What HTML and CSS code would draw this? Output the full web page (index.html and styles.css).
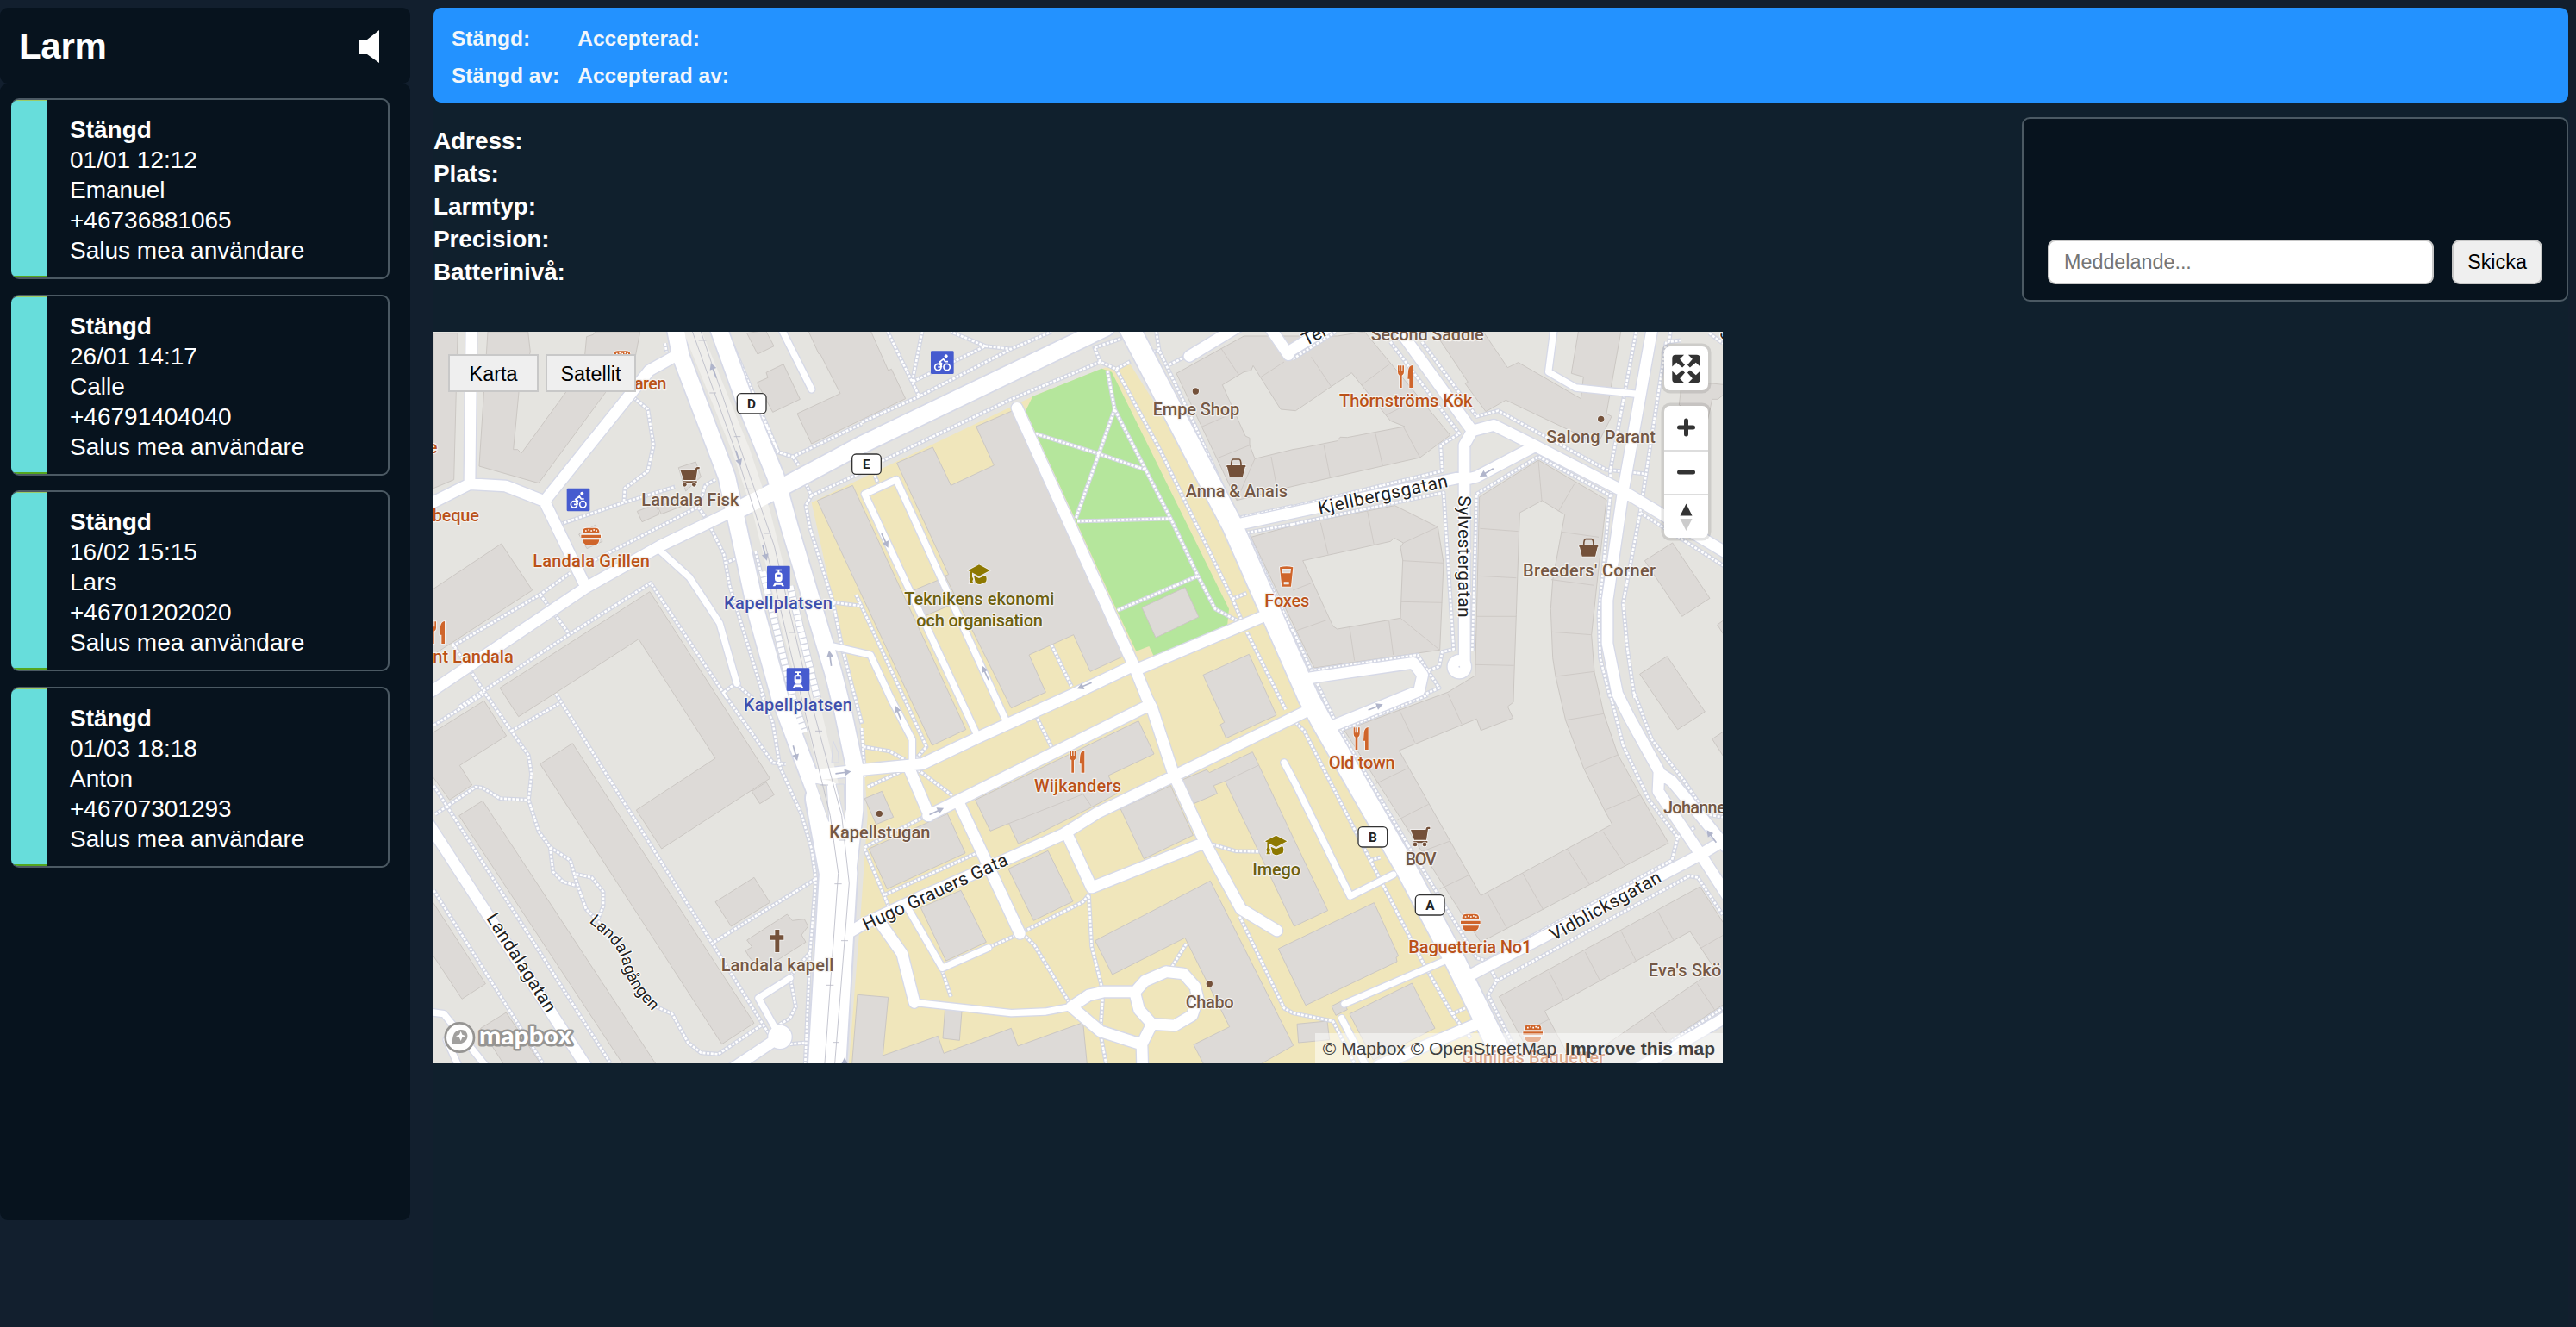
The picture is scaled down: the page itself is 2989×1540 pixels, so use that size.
FILE: index.html
```html
<!DOCTYPE html>
<html lang="sv">
<head>
<meta charset="utf-8">
<title>Larm</title>
<link rel="stylesheet" href="styles.css">
</head>
<body>
<div class="app">
  <aside class="sidebar">
    <header class="sidebar-head">
      <h1>Larm</h1>
      <svg class="speaker" viewBox="0 0 26 38" aria-hidden="true"><path d="M1 11h9L24 0v38L10 28H1z"/></svg>
    </header>
    <div class="alarm-list">
      <article class="alarm"><div class="bar"></div><div class="alarm-text"><b>Stängd</b><span>01/01 12:12</span><span>Emanuel</span><span>+46736881065</span><span>Salus mea användare</span></div></article>
      <article class="alarm"><div class="bar"></div><div class="alarm-text"><b>Stängd</b><span>26/01 14:17</span><span>Calle</span><span>+46791404040</span><span>Salus mea användare</span></div></article>
      <article class="alarm"><div class="bar"></div><div class="alarm-text"><b>Stängd</b><span>16/02 15:15</span><span>Lars</span><span>+46701202020</span><span>Salus mea användare</span></div></article>
      <article class="alarm"><div class="bar"></div><div class="alarm-text"><b>Stängd</b><span>01/03 18:18</span><span>Anton</span><span>+46707301293</span><span>Salus mea användare</span></div></article>
    </div>
  </aside>
  <main class="main">
    <section class="status">
      <span>Stängd:</span><span>Accepterad:</span>
      <span>Stängd av:</span><span>Accepterad av:</span>
    </section>
    <section class="details">
      <div class="info">
        <span>Adress:</span><span>Plats:</span><span>Larmtyp:</span><span>Precision:</span><span>Batterinivå:</span>
      </div>
      <form class="chat">
        <input type="text" placeholder="Meddelande...">
        <button type="button">Skicka</button>
      </form>
    </section>
    <section class="map">
      <svg class="map-canvas" viewBox="9 15 4488 2547" preserveAspectRatio="none">
        <defs>
          <g id="w22">
            <path d="M790 770L900 870 1005 1030 1065 1240M1215-5L1325 215M1665 2030L1780 2230 1940 2160M1510 580L1620 530 2000 1365M1510 580L1897 1410M1400 1110L1530 1140 1600 1290 1675 1435V1530M1250 2265L1140 2335 1210 2460M3910 0L3890 155 3985 210 4200 232M3170 2405L3260 2580M2970 1515L3010 1590 3200 1980 3350 1905M3180 2355L3540 2200M1683 2350L2020 2387 2140 2382 2230 2365M9 2385L45 2390 190 2570M55 2480L95 2570"/>
          </g>
          <g id="w38">
            <path d="M-10 1275L540 905 800 760 1050 640M141 0L135 545M-5 615L135 545 260 552 395 605 760 150 850 100M395 605L540 905M2040 280L2450 1185 2492 1290 2510 1325 2585 1555 2695 1795 2820 2025 2945 2100M2460 1190L2900 1005M2440 1180L2230 1280 1910 1425 1710 1520 1500 1540 1320 1560M1730 1700L2500 1315M1665 1535L1735 1700M1840 1660L2050 2110M1450 2110L1500 2080 1700 1985 2200 1765 2320 1690 2580 1565 3060 1330M2215 1765L2300 1950 2690 1795M1570 2080L1640 2180 1683 2350M2450 2315L2485 2275 2560 2243 2620 2250 2660 2295 2670 2335 2650 2395 2590 2430 2510 2425 2465 2375ZM2230 2365L2290 2325 2340 2313H2450M2230 2365L2330 2450 2470 2495M2510 2425L2475 2495 2477 2570M3300 2570L3640 2425M2790 690L3000 645 3595 520M3350-20L3625 360 3597 410 3598 1170M3625 360L3700 340 3840 410 4150 570 4510 785M3600 530L3640 520 3840 415M4252 0L4150 570 4095 950V1100L4130 1275 4170 1355 4275 1545 4272 1615 4420 1835 4520 1990M4275 1550L4320 1580 4510 1810M3580 2275L4420 1835 4510 1780M4200 2580L4510 2400M3060 1220L3420 1168 3452 1210 3440 1265 3120 1395M2640 100L2830-15M2920 0L2985 95M2985 85L3140-10M-10 1725L545 2580M1215 2470L1050 2580"/>
            <circle cx="3580" cy="1181" r="22"/><circle cx="1215" cy="2470" r="22"/>
          </g>
          <g id="w58">
            <path d="M1050 645L1230 552 1500 408 2350 0M850 0L870 100 1030 520 1070 700 1135 1000 1215 1290 1290 1490 1370 1700M1000 0L1090 250 1200 520 1250 700 1340 1000 1400 1200 1435 1340 1475 1530V1680L1450 1900"/>
          </g>
          <g id="w70"><path d="M2425-10L2790 690 3055 1290 3110 1390 3400 1895 3570 2215 3745 2570"/></g>
          <g id="w130"><path d="M1370 1640L1418 1900 1378 2580"/></g>
          <g id="foot">
            <path d="M695 235L755 285 775 410 755 500 675 560 672 605M450 685L670 610 850 555M570 810L930 625 955 660M940 600L955 550 990 530M75 1110L380 930 485 855M380 930L480 1065M100 1320L480 1070 765 890 1030 1290M75 1100L200 1290M1030 15L1210 435 1260 450 1500 335M1150 310L1210 435M1260 450L1280 480M1305 545L1325 585 1500 505M1325 585L1305 620 1320 700 1400 957 1430 1110 1500 1380M1400 957L1500 970M975 700L1020 790 1040 900 1160 1290M1025 820L1060 805M1060 1240L1120 1290M1020 1270L1060 1240M1130 780L1150 860M815 55L820 85"/>
            <path transform="translate(1500)" d="M90 15L175 190 200 240M210 15L175 190 430 65 310 15M430 65L520 75 660 15M0 330L200 240 520 75M70 465L520 250 830 120 885 145 935 118M830 120L810 70 905 38M885 145L1040 430 1290 945 1320 1015M855 150L880 285 1075 665 1170 865 1230 980 1305 1020M605 370L825 440 985 495M880 285L825 440 745 665M750 675L1075 665M890 985L1170 865M1290 945L1340 925M1340 1060L1475 1330M660 1105L730 1250M-20 930L140 1275 225 1460 190 1500M45 515L55 540M1025 15L1035 80 1150 320 1305 665 1500 622M1035 80L995 90M1070 130L1130 100M1500 685L1340 715 1420 890 1500 1060"/>
            <path transform="translate(3000)" d="M340 50L580 370 515 410 520 500 0 625M450 50L640 310 715 290 1090 495 1230 510M0 685L525 575 560 1120 520 1130 510 1180 470 1195 510 1255 430 1290M625 1125L640 580 855 450 1105 585 1065 1000 1070 1150 1105 1290M1195 15L1105 500 1110 590M1300 50L1210 640 1150 960 1165 1120 1190 1290M1210 645L1500 830M0 1050L65 1195 435 1140 470 1195M85 1240L145 1365M0 110L150 15M1315 15L1310 50 1350 45M1450 20L1497 55"/>
            <path transform="translate(0 1275)" d="M10 110L185 0M190 0L280 130 340 215 350 280 340 370 375 480 415 535 485 580 510 665 540 750 590 800M415 535L425 620 460 655 505 668M505 628L560 640 600 690V740L580 790M280 130L445 35M435 0L1180 1190M15 420L155 325 180 328 240 365 340 370M10 320L625 1287M10 685L390 1287M785 1090L840 1115 895 1215 940 1250 1000 1255 1150 1155M985 865L1340 645M1020 0L1190 240 1235 245M1150 0L1190 100 1215 255 1290 420 1325 540 1340 645 1320 900 1303 1287M1320 900L1250 985 1270 1090 1250 1130 1200 1160M1250 1220L1305 1215"/>
            <path transform="translate(1500 1275)" d="M5 185L95 200 150 230M20 325L150 265M195 265L315 355M0 120L10 290M605 75L660 185M10 535L215 430M10 540L95 745M80 700L400 555M450 880L540 840 770 725 790 700 800 880 840 1040 830 1180 850 1287M570 845L600 875 725 1080M280 965L310 1055M1080 950L1130 870M1220 525L1300 548 1385 550M1315 775L1470 1095 1500 1112 1640 1140 1715 1287"/>
            <path transform="translate(3000 1275)" d="M10 100L40 130 270 580 450 930 555 1115 620 1200M270 580L305 570M165 130L400 525 640 920 675 930 1320 580 1340 500 1240 370 1150 180 1105 0M370 540L400 525M1190 0L1250 160 1360 300 1440 420 1497 430M1340 500L1400 465M675 930L710 1000 680 1050 800 1287M710 1000L1380 635 1410 640 1497 770M555 1115L600 1095M1200 1287L1497 1095M170 125L470 5"/>
          </g>
          <g id="burger"><path d="M-29-12V-20Q-27-30-14-30H14Q27-30 29-20V-12ZM-34-6H34V4H-34ZM-29 11H29Q27 29 12 29H-12Q-27 29-29 11Z"/><path class="crumbs" d="M-20-20h5M-10-23h5M-1-20h5M8-23h5M17-20h5"/></g>
          <g id="cart"><path d="M-34-24H18L20-31Q22-34 26-34H33V-27H26L20 11H-22ZM-24 15H24V22H-24Z"/><circle cx="-19" cy="27" r="7"/><circle cx="14" cy="27" r="7"/></g>
          <g id="fork"><path d="M-26-38h5v18h3v-18h5v18h3v-18h5v22q0 9-7 12V39H-20V-4q-6-3-6-12ZM10-20Q12-38 25-39V39H14V8H8Z"/></g>
          <g id="basket"><path d="M-33-8H33V-2H31L23 31H-23L-31-2H-33Z"/><path class="handle" d="M-17-7Q-17-29-10-29H10Q17-29 17-7"/></g>
          <g id="cap"><path d="M-38-14L0-34 38-14 0 6ZM-18 5L0 13 22 3Q29 12 24 26L4 34Q-14 33-14 22ZM-31-9H-24V8L-20 16-23 23 -20 31H-34L-31 23-34 16-31 8Z"/></g>
          <g id="beer"><path fill-rule="evenodd" d="M-23-33Q0-40 23-33L16 34H-16ZM-16-28L-14-12H14L16-28ZM-9 18V27H9V18Z"/></g>
          <g id="bike"><rect x="-40" y="-40" width="80" height="80" rx="4"/><g class="ink"><circle cx="-15" cy="16" r="11"/><circle cx="16" cy="16" r="11"/><path d="M-15 16L-5 16-2 4-9-2 4-12 10-3H20M-9-2L-2 16"/><circle class="solid" cx="13" cy="-22" r="6"/></g></g>
          <g id="tram"><rect x="-40" y="-40" width="80" height="80" rx="4"/><path class="white" fill-rule="evenodd" d="M-11-28H11V-23H3V-17Q13-16 13-9V6Q13 14 6 15H-6Q-13 14-13 6V-9Q-13-16-3-17V-23H-11ZM-7-10V-1H7V-10ZM-12 17H12L20 31H12L9 26H-9L-12 31H-20Z"/></g>
          <g id="arrow"><path d="M-27 0H10" /><path class="tip" d="M5-12L28 0 5 12Z"/></g>
          <path id="gangen" d="M550 2070C620 2130 655 2160 668 2215S700 2305 775 2385"/>
        </defs>

        <rect class="land" x="0" y="0" width="4510" height="2580"/>
        <path class="campus" d="M1325 610L1400 950 1455 1170 1500 1400 1520 1700 1495 2055 1455 2562H3740L3560 2205 3400 1895 3055 1290 2790 690 2435 130 2345 140 2095 240 1500 525Z"/>
        <path class="park" d="M2095 240L2335 143 2370 155 2778 980 2772 1040 2520 1152 2500 1110 2455 1127 2390 990 2070 290Z"/>

        <g class="buildings">
          <path d="M9 20H93L80 530 9 560ZM198 15H338L346 85 306 225 287 425 302 425 315 438 470 225 536 95 542 32 565 25 572 15H728L712 100 608 226 375 542 168 483ZM1100 20L1165 10 1194 65 1137 93ZM1135 192L1173 175 1167 157 1227 128 1285 250 1190 295ZM1313 10H1530L1592 150 1603 145 1652 248 1325 405 1275 300 1425 230 1355 92 1350 92ZM862 488L922 468 940 520 887 570ZM718 640L783 615 795 650 735 677ZM790 625L880 590 905 610 802 650ZM515 720L572 688 597 745 543 770ZM0 916L245 753 353 915 0 1145ZM240 1255L762 920 1180 1570 803 1815 715 1680 990 1500 723 1085 430 1275 305 1355ZM1117 1615L1167 1583 1195 1627 1145 1658ZM1345 603L1468 550 1862 1400 1745 1455Z"/>
          <path transform="translate(1500)" d="M122 472L247 417 310 550 460 480 398 345 525 290 910 1145 795 1198 737 1070 582 1140 640 1270 520 1325 290 865 302 860ZM180 915L265 880 305 968 218 1005ZM975 975L1125 905 1173 1008 1023 1080ZM1188 1210L1348 1138 1443 1350 1268 1430 1248 1383 1262 1375Z"/>
          <path fill-rule="evenodd" d="M2595 160L2830 30 3155 30 3250 15 3548 375 3443 453 3000 553 2805 602ZM2755 200L2830 155 2855 150 2862 133 2958 285 3010 290 3205 158 3340 325 3390 345 3190 383 3165 382 3155 395 3030 420 3000 425 2868 457 2850 410 2850 385 2835 378Z"/>
          <path fill-rule="evenodd" d="M2855 730L3000 690 3355 620 3505 695 3525 820 3512 1123 3075 1185 3000 1030ZM3035 812L3340 745 3353 733 3385 750 3375 765 3383 810 3375 1012 3155 1050 3140 1040Z"/>
          <path transform="translate(3000)" fill-rule="evenodd" d="M650 590L855 462 1092 600 1058 900 1040 1070 1050 1200 1083 1345 1132 1488 1210 1628 1308 1795 655 2140 600 2060 180 1403 540 1270 635 1212ZM790 645L868 603 947 652 935 715 905 880 898 980 905 1150 915 1215 950 1368 1013 1535 1085 1680 1112 1730 655 1978 370 1473 640 1363 655 1403 767 1360 748 1320 768 1305 770 1230 778 1000Z"/>
          <path transform="translate(3000)" d="M490 10H660L748 140 785 122 1003 248 1012 172 970 160 995 10H1143L1092 300 1110 310 1062 405 742 253 672 293 600 195 610 190ZM1355 185L1510 200V225L1480 250 1460 250 1445 320 1345 270ZM1225 812L1322 750 1452 943 1355 1006ZM1478 1035L1510 1012V1085ZM1208 1207L1303 1145 1435 1338 1340 1400ZM1460 1433L1510 1400V1510ZM198 2390L415 2283 495 2440 280 2550ZM15 2425L120 2415 128 2480 20 2490ZM135 2363L175 2343 190 2375 150 2395Z"/>
          <path transform="translate(0 1275)" d="M0 140L185 25 263 147 100 250 143 318 65 370 0 280ZM380 245L493 173 1125 1147 1013 1220ZM98 425L180 373 790 1300H675ZM990 725L1125 640 1180 727 1045 810ZM1100 858L1240 768 1258 790 1300 785 1313 810 1290 840 1305 865 1155 960 1110 920 1095 895 1118 882ZM0 715L190 1010 108 1063 0 900ZM173 1165L262 1110 390 1300H260Z"/>
          <path transform="translate(1500 1275)" d="M10 365L70 340 110 430 50 455ZM25 540L298 418 360 555 88 680ZM395 370L963 95 1017 210 858 285 888 348 800 395 545 523 512 452 447 478ZM900 400L1075 320 1153 493 982 575ZM1115 300L1200 265 1210 275 1360 203 1622 755 1505 810 1265 305 1225 320 1237 348 1155 383ZM510 610L648 547 735 723 598 790ZM205 745L345 685 433 865 293 930ZM812 860L1213 652 1502 1225 1370 1300H1195L1155 1222 1280 1160 1125 850 872 978ZM1450 888L1783 728 1868 913 1860 918 1863 933 1545 1085ZM-15 1048L92 1057 73 1260 265 1192 285 1252 520 1165 543 1227 770 1145 785 1300H-35ZM290 1095L348 1105 340 1207 282 1200Z"/>
          <path transform="translate(3000 1275)" fill-rule="evenodd" d="M718 1055L1418 672 1510 815V1075L1170 1300H850ZM877 1105L1383 828 1470 960 1130 1195 980 1300Z"/>
          <path class="walls" d="M2750 72L2812 165M2890 172L2970 120M2685 345L2770 308M2738 455L2850 410M2868 457L2805 602M2925 450L2945 560M3065 103L3133 205M3240 200L3340 125M3325 305L3385 275M3108 408L3130 522M3288 370L3313 482M3385 345L3443 453M3097 680L3123 790M3260 640L3283 757M3385 750L3505 695M3383 812L3525 820M3378 955L3520 958M3375 1012L3512 1123M3335 1022L3350 1140M3198 1045L3215 1160M3015 1055L3120 1018M3000 915L3065 890M3855 462L3867 603M3980 545L3925 640M3652 700L3785 710M3935 712L4065 730M3648 865L3778 872M3900 878L4050 898M3640 1006H3778M3903 1060L4040 1070M3635 1174L3770 1177M3915 1215L4050 1198M3950 1367L4083 1345M4018 1535L4132 1488M4088 1680L4210 1628M4080 1755L4155 1870M3955 1815L4032 1938M3800 1900L3872 2027M3678 1970L3747 2095M3512 1955L3617 1905M3435 1830L3548 1788M3365 1715L3473 1660M3290 1588L3400 1535M3370 1330L3425 1445M3540 1275L3588 1380M3893 2245L3945 2345M4018 2175L4070 2275M4145 2105L4195 2205M4272 2035L4325 2132M4418 2162L4500 2115M4250 2382L4300 2455M4408 2285L4468 2375M3850 2430L3890 2410M2012 1727L2270 1625 2298 1665M2765 1580L2880 1525"/>
        </g>

        <use href="#foot" class="foot-case"/><use href="#foot" class="foot-dots"/>

        <use href="#w22" class="case" stroke-width="30"/><use href="#w38" class="case" stroke-width="46"/><use href="#w58" class="case" stroke-width="68"/><use href="#w70" class="case" stroke-width="80"/><use href="#w130" class="case" stroke-width="142"/>
        <path class="trambed" d="M905 0L1080 430 1150 640 1240 1000 1330 1340 1400 1640"/>
        <path class="platform" d="M1155 850L1260 1290 1300 1410M1250 900L1345 1290"/>
        <path class="sleepers" d="M1155 850L1260 1290 1300 1410M1250 900L1345 1290"/>
        <use href="#w22" class="road" stroke-width="22"/><use href="#w38" class="road" stroke-width="38"/><use href="#w58" class="road" stroke-width="58"/><use href="#w70" class="road" stroke-width="70"/><use href="#w130" class="road" stroke-width="130"/>
        <path class="island" d="M1395 1515H1420L1418 1480 1400 1440ZM1410 1590H1438L1442 1720ZM1340 1588L1378 1595 1385 1720Z"/>
        <path class="rail" d="M905 0L1060 430 1165 760 1290 1290 1390 1700 1418 1900 1370 2575M935 0L1070 400 1195 760 1320 1290 1430 1700 1456 1935 1405 2575M932 45H958M970 228H993M1055 380H1078M1092 562H1115M1160 717H1184M1247 1062H1270M1338 1405H1362M1357 1593H1383M1420 1785H1444M1405 1937H1430M1428 2135H1452M1377 2290H1402M1398 2489H1422"/>
        <g class="arrows">
          <use href="#arrow" transform="translate(984 150) rotate(-110)"/><use href="#arrow" transform="translate(1070 455) rotate(72)"/><use href="#arrow" transform="translate(1162 785) rotate(75)"/><use href="#arrow" transform="translate(1390 1152) rotate(-98)"/>
          <use href="#arrow" transform="translate(1580 742) rotate(65)"/><use href="#arrow" transform="translate(1930 1203) rotate(-115)"/><use href="#arrow" transform="translate(2275 1247) rotate(157)"/><use href="#arrow" transform="translate(3675 505) rotate(150)"/>
          <use href="#arrow" transform="translate(1268 1482) rotate(75)"/><use href="#arrow" transform="translate(1435 1550) rotate(-8)"/><use href="#arrow" transform="translate(1627 1343) rotate(-112)"/><use href="#arrow" transform="translate(1760 1685) rotate(-25)"/><use href="#arrow" transform="translate(3288 1322) rotate(-22)"/><use href="#arrow" transform="translate(4458 1772) rotate(-127)"/><use href="#arrow" transform="translate(1440 2570) rotate(-90)"/>
        </g>

        <g class="brown">
          <use href="#cart" x="902" y="520"/><use href="#cart" x="3445" y="1773"/><use href="#basket" x="2803" y="488"/><use href="#basket" x="4030" y="766"/>
          <path d="M1198 2097h15v19h15v16h-15v43h-15v-43h-16v-16h16z"/>
          <circle cx="2662" cy="222" r="11"/><circle cx="4073" cy="319" r="11"/><circle cx="1561" cy="1693" r="11"/><circle cx="2710" cy="2285" r="11"/>
        </g>
        <g class="orange">
          <use href="#burger" x="557" y="728"/><use href="#burger" x="665" y="112"/><use href="#burger" x="3619" y="2072"/><use href="#burger" x="3836" y="2458"/>
          <use href="#fork" x="23" y="1062"/><use href="#fork" x="3392" y="171"/><use href="#fork" x="2250" y="1511"/><use href="#fork" x="3238" y="1431"/><use href="#beer" x="2978" y="868"/>
        </g>
        <g class="olive"><use href="#cap" x="1908" y="860"/><use href="#cap" x="2942" y="1803"/></g>
        <g class="transit"><use href="#bike" x="513" y="600"/><use href="#bike" x="1780" y="122"/><use href="#tram" x="1210" y="870"/><use href="#tram" x="1278" y="1226"/></g>

        <g class="shields">
          <rect x="1066" y="230" width="101" height="70" rx="14"/><text x="1116" y="281">D</text>
          <rect x="1466" y="441" width="101" height="70" rx="14"/><text x="1516" y="492">E</text>
          <rect x="3228" y="1739" width="101" height="70" rx="14"/><text x="3279" y="1790">B</text>
          <rect x="3427" y="1976" width="101" height="70" rx="14"/><text x="3478" y="2027">A</text>
        </g>

        <g class="labels">
          <g class="t-brown">
            <text x="733" y="622" textLength="339">Landala Fisk</text><text x="2513" y="306" textLength="302">Empe Shop</text><text x="2627" y="591" textLength="355">Anna &amp; Anais</text><text x="3272" y="44" textLength="393">Second Saddle</text><text x="3883" y="403" textLength="380">Salong Parant</text><text x="3801" y="868" textLength="462">Breeders' Corner</text><text x="1387" y="1778" textLength="351">Kapellstugan</text><text x="1010" y="2240" textLength="392">Landala kapell</text><text x="2627" y="2369" textLength="168">Chabo</text><text x="3392" y="1873" textLength="108">BOV</text><text x="4290" y="1691" textLength="218">Johanne</text><text x="4238" y="2260" textLength="254">Eva's Skö</text>
          </g>
          <g class="t-orange">
            <text x="355" y="834" textLength="407">Landala Grillen</text><text x="708" y="216" textLength="112">aren</text><text x="-10" y="438" textLength="30">e</text><text x="5" y="674" textLength="163">beque</text><text x="7" y="1168" textLength="280">nt Landala</text><text x="2902" y="972" textLength="156">Foxes</text><text x="3162" y="277" textLength="463">Thörnströms Kök</text><text x="2100" y="1616" textLength="303">Wijkanders</text><text x="3125" y="1537" textLength="231">Old town</text><text x="3403" y="2178" textLength="429">Baguetteria No1</text><text x="3588" y="2562" textLength="499">Gunillas Baguetter</text>
          </g>
          <g class="t-olive">
            <text x="1648" y="965" textLength="522">Teknikens ekonomi</text><text x="1690" y="1040" textLength="440">och organisation</text><text x="2860" y="1907" textLength="167">Imego</text>
          </g>
          <g class="t-blue"><text x="1020" y="980" textLength="378">Kapellplatsen</text><text x="1088" y="1335" textLength="379">Kapellplatsen</text></g>
          <g class="t-street">
            <text transform="translate(3093 650) rotate(-12)" textLength="460">Kjellbergsgatan</text><text transform="translate(3577 586) rotate(90)" textLength="424">Sylvestergatan</text><text transform="translate(1515 2101) rotate(-25)" textLength="550">Hugo Grauers Gata</text><text transform="translate(191 2056) rotate(57.5)" textLength="396">Landalagatan</text><text transform="translate(3910 2137) rotate(-29)" textLength="432">Vidblicksgatan</text><text transform="translate(3046 65) rotate(-27)">Ter</text><text transform="translate(4482 30) rotate(30)">S</text>
            <text font-size="56"><textPath href="#gangen" textLength="388" lengthAdjust="spacingAndGlyphs">Landalagången</textPath></text>
          </g>
        </g>

        <g class="logo">
          <circle cx="100" cy="2472" r="50"/><path class="drop" d="M75 2495C72 2455 90 2445 105 2445C122 2445 131 2460 126 2475C120 2492 98 2498 75 2495Z"/><path class="star" d="M104 2450L109 2462 121 2467 109 2472 104 2484 99 2472 87 2467 99 2462Z"/>
          <text x="168" y="2495" textLength="322" lengthAdjust="spacingAndGlyphs">mapbox</text>
        </g>
      </svg>
      <div class="layer-buttons"><button type="button">Karta</button><button type="button">Satellit</button></div>
      <div class="map-controls">
        <button type="button" class="ctrl" aria-label="Fullscreen"><svg viewBox="0 0 51 51"><path d="M9 13q0-4 4-4h10l-5 5 6 7-3 3-7-6-5 5zM42 13q0-4-4-4H28l5 5-6 7 3 3 7-6 5 5zM9 38q0 4 4 4h10l-5-5 6-7-3-3-7 6-5-5zM42 38q0 4-4 4H28l5-5-6-7 3-3 7 6 5-5z"/></svg></button>
        <div class="zoom">
          <button type="button" aria-label="Zoom in"><svg viewBox="0 0 51 50"><path class="thick" d="M17.500 25h16M25.500 17v16"/></svg></button>
          <button type="button" aria-label="Zoom out"><svg viewBox="0 0 51 50"><path class="thick" d="M17.500 25h16"/></svg></button>
          <button type="button" aria-label="Compass"><svg viewBox="0 0 51 50"><path d="M18.500 24.500h14l-7-14z"/><path class="pale" d="M18.500 28h14l-7 14z"/></svg></button>
        </div>
      </div>
      <div class="attribution"><span>© Mapbox</span> <span>© OpenStreetMap</span> <b>Improve this map</b></div>
    </section>
  </main>
</div>
</body>
</html>
```
FILE: styles.css
```css
* { box-sizing: border-box; }
body { margin: 0; background: #121f2e; color: #fff; font: 28px "Liberation Sans", Arial, sans-serif; }
button, input { font: 23.33px "Liberation Sans", Arial, sans-serif; margin: 0; }
.app { display: flex; height: 1540px; padding: 9px 9px 0 0; overflow: hidden; }

.sidebar { width: 476px; margin-right: 27px; flex: none; }
.sidebar-head { display: flex; align-items: center; justify-content: space-between; height: 88px; padding: 1px 34px 0 22px; background: #07131e; border-radius: 9px; }
.sidebar-head h1 { margin: 0; font-size: 42px; letter-spacing: -.3px; }
.speaker { width: 26px; height: 38px; fill: #fff; }
.alarm-list { display: flex; flex-direction: column; gap: 17.5px; height: 1319px; padding: 17px 24px 0 13px; background: #07131e; border-radius: 9px; }
.alarm { display: flex; height: 210px; border: 2px solid #4b5963; border-left: 0; border-radius: 9px; overflow: hidden; }
.bar { width: 42px; background: #67dddb; border-top: 1px solid #9ccb66; border-bottom: 2px solid #55a51f; }
.alarm-text { display: flex; flex-direction: column; padding: 17px 0 0 26px; line-height: 35.1px; }

.main { flex: 1; background: #10202d; }
.status { display: grid; grid-template-columns: max-content max-content; grid-auto-rows: 43px; column-gap: 21px; height: 110px; padding: 14px 21px; background: #2392ff; border-radius: 9px; color: #f3f6fa; font-size: 24.5px; font-weight: bold; line-height: 43px; }
.details { display: flex; justify-content: space-between; height: 266px; }
.info { display: flex; flex-direction: column; padding-top: 26px; font-weight: bold; line-height: 38.05px; letter-spacing: -.1px; }
.chat { display: flex; align-items: flex-end; gap: 21px; width: 634px; height: 214px; margin: 17px 0 0; padding: 0 28px 18px; background: #07131e; border: 2px solid #4b5963; border-radius: 9px; }
.chat input, .chat button { height: 52px; border: 2px solid #c8c8c8; border-radius: 9px; }
.chat input { flex: 1; min-width: 0; padding: 0 17px; background: #fff; }
.chat input::placeholder { color: #757575; }
.chat button { width: 105px; padding: 0; background: #efefef; color: #000; }

.map { position: relative; width: 1496px; height: 849px; overflow: hidden; }
.map-canvas { display: block; width: 1496px; height: 849px; }
.land { fill: #e5e4e0; }
.campus { fill: #f0e6bb; }
.park { fill: #b5e69c; }
.buildings path { fill: #dddad7; stroke: #cbc7c3; stroke-width: 3; }
.buildings .walls { fill: none; stroke-width: 2.500; }
.foot-case, .foot-dots, .case, .road { fill: none; stroke-linejoin: round; }
.foot-case { stroke: #d3d6e2; stroke-width: 15; }
.foot-dots { stroke: #fff; stroke-width: 8; stroke-dasharray: 9 5; }
.case { stroke: #d6d9e7; stroke-linecap: round; }
.road { stroke: #fff; stroke-linecap: round; }
.trambed { fill: none; stroke: #efeeeb; stroke-width: 60; }
.platform { fill: none; stroke: #d3d6e2; stroke-width: 28; }
.sleepers { fill: none; stroke: #fff; stroke-width: 22; stroke-dasharray: 17 4; }
.island { fill: #e5e4e0; stroke: #d6d9e7; stroke-width: 3; }
.rail { fill: none; stroke: #b9bac6; stroke-width: 2.500; }
.arrows { fill: none; stroke: #b0b5cb; stroke-width: 5; }
.tip { fill: #b0b5cb; stroke: none; }
.brown, .orange, .olive { stroke: #fff; stroke-opacity: .7; stroke-width: 5; paint-order: stroke; }
.brown { fill: #74513a; }
.orange { fill: #cf652b; }
.olive { fill: #8d7800; }
.transit { fill: #465bcf; }
.crumbs { fill: none; stroke: #fff; stroke-opacity: 1; stroke-width: 5; }
.handle { fill: none; stroke: #74513a; stroke-opacity: 1; stroke-width: 5; }
.ink { fill: none; stroke: #fff; stroke-width: 5; }
.solid { fill: #fff; stroke: none; }
.white { fill: #fff; }
.shields rect { fill: #fff; stroke: #333; stroke-width: 4; }
.shields text { fill: #222; font: bold 46px Roboto, sans-serif; text-anchor: middle; }
.labels { font-family: Roboto, sans-serif; font-size: 60px; font-weight: 500; stroke: #f4f2ef; stroke-width: 7; stroke-linejoin: round; paint-order: stroke; }
.t-brown { fill: #755845; }
.t-orange { fill: #bb5219; }
.t-olive { fill: #6d6010; }
.t-blue { fill: #3e4fad; }
.t-street { fill: #222; font-size: 63px; font-weight: 400; stroke: #fff; }
.logo circle { fill: #fff; fill-opacity: .9; stroke: #969593; stroke-width: 8; }
.drop { fill: #a09f9d; }
.star { fill: #fff; }
.logo text { font: 900 84px Lato, sans-serif; fill: #fff; stroke: #969593; stroke-width: 15; stroke-linejoin: round; paint-order: stroke; }

.layer-buttons { position: absolute; left: 17px; top: 26px; display: flex; gap: 8px; }
.layer-buttons button { width: 105px; height: 44px; padding: 2px 0 0; background: #efefef; border: 2px solid #c8c8c8; color: #000; }
.map-controls { position: absolute; right: 17px; top: 17px; display: flex; flex-direction: column; gap: 18px; }
.map-controls button { display: block; width: 51px; height: 51px; padding: 0; border: 0; background: #fff; }
.map-controls svg { display: block; width: 51px; height: 50px; fill: #333; }
.map-controls .ctrl, .zoom { border-radius: 7px; box-shadow: 0 0 0 3.500px rgba(0,0,0,.1); }
.zoom { overflow: hidden; }
.zoom svg { margin-top: -2px; }
.zoom button + button { border-top: 2px solid #ddd; }
.map-controls .thick { fill: none; stroke: #333; stroke-width: 5; stroke-linecap: round; }
.map-controls .pale { fill: #ccc; }
.attribution { position: absolute; right: 0; bottom: 0; height: 35px; padding: 0 9px; background: rgba(255,255,255,.5); color: #404040; font-size: 21px; line-height: 35px; white-space: nowrap; }
.attribution b { margin-left: 4px; }
```
